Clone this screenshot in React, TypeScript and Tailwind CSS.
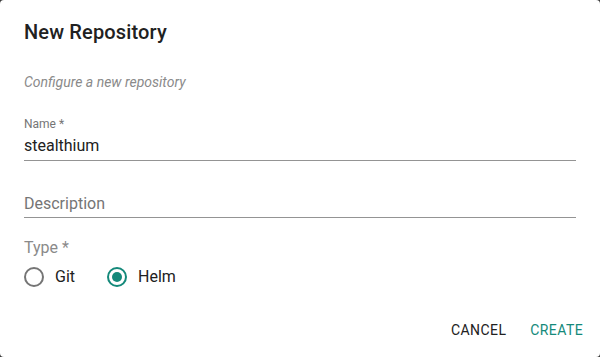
import React, { useState } from 'react';

function Radio({ checked }: { checked: boolean }) {
    return (
        <svg width="20" height="20" viewBox="0 0 20 20" className="shrink-0">
            <circle
                cx="10"
                cy="10"
                r="9"
                fill="none"
                stroke={checked ? '#14897a' : '#757575'}
                strokeWidth="2"
            />
            {checked && <circle cx="10" cy="10" r="5" fill="#14897a" />}
        </svg>
    );
}

export default function App() {
    const [type, setType] = useState<'git' | 'helm'>('helm');

    return (
        <div className="w-[600px] h-[357px] bg-[#3a3a3a] font-['Roboto',sans-serif]">
            <div className="w-full h-full bg-white rounded-[4px] flex flex-col">
                <div className="h-16 px-6 flex items-center text-[20px] font-medium text-[#212121] tracking-[0.15px]">
                    New Repository
                </div>

                <div className="px-6 flex flex-col">
                    <p className="mt-[8px] text-[14px] leading-5 italic text-[#8a8a8a]">
                        Configure a new repository
                    </p>

                    <div className="mt-[25px] flex flex-col">
                        <label className="text-[12px] leading-[14px] text-[#757575]">Name *</label>
                        <div className="h-[30px] flex items-center border-b border-[#949494] text-[16px] text-[#212121]">
                            stealthium
                        </div>
                    </div>

                    <div className="pt-[33px] pb-[4px] border-b border-[#949494] text-[16px] leading-[19px] text-[#757575]">
                        Description
                    </div>

                    <div className="mt-[20px] text-[16px] leading-[19px] text-[#8a8a8a]">Type *</div>

                    <div className="mt-[8px] flex items-center text-[16px] text-[#212121]">
                        <button onClick={() => setType('git')} className="flex items-center gap-[11px]">
                            <Radio checked={type === 'git'} />
                            <span>Git</span>
                        </button>
                        <button onClick={() => setType('helm')} className="ml-[32px] flex items-center gap-[11px]">
                            <Radio checked={type === 'helm'} />
                            <span>Helm</span>
                        </button>
                    </div>
                </div>

                <div className="mt-auto pb-[17px] pr-[17px] flex justify-end gap-6 text-[14px] leading-5 tracking-[0.4px]">
                    <button className="uppercase text-[#212121]">Cancel</button>
                    <button className="uppercase text-[#14897a]">Create</button>
                </div>
            </div>
        </div>
    );
}
